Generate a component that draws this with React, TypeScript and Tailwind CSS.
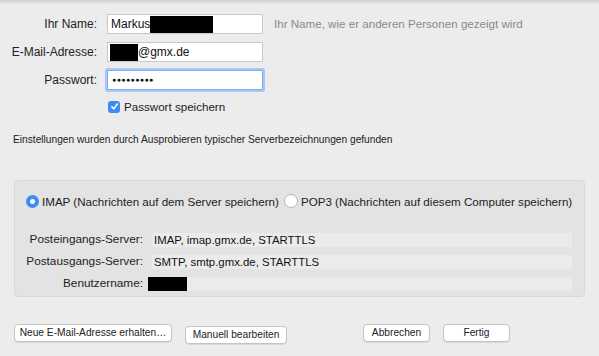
import React from 'react';

const font = { fontFamily: '"Liberation Sans", Arial, sans-serif' };

function Label({ children }: { children: React.ReactNode }) {
  return <div className="w-[97px] text-right text-[12px] text-[#222] whitespace-nowrap">{children}</div>;
}

function Redacted({ w }: { w: string }) {
  return <span className={`inline-block bg-black h-[17px] ${w}`} />;
}

function MacButton({ children, w }: { children: React.ReactNode; w: string }) {
  return (
    <button
      className={`h-[18px] ${w} rounded-[4px] bg-white border border-[#c4c4c4] shadow-[0_1px_0_rgba(0,0,0,0.08)] text-[10.2px] text-[#222] leading-none whitespace-nowrap`}
    >
      {children}
    </button>
  );
}

function InfoRow({ label, children }: { label: string; children?: React.ReactNode }) {
  return (
    <div className="flex items-center h-[14px]">
      <div className="w-[126px] text-right text-[11.8px] text-[#222] pr-[9px] shrink-0 whitespace-nowrap">{label}</div>
      <div className="flex-1 h-[14px] bg-[#ebebeb] text-[11.4px] text-[#111] leading-[14px] flex items-center whitespace-nowrap">
        {children}
      </div>
    </div>
  );
}

export default function App() {
  return (
    <div className="w-[599px] h-[356px] bg-[#ececec] relative overflow-hidden" style={font}>
      {/* Schatten der Titelleiste */}
      <div className="h-[4px] bg-gradient-to-b from-[#cfcfcf] to-[#ececec]" />

      {/* Formular */}
      <div className="flex flex-col gap-[8px] pt-[10px]">
        <div className="flex items-center gap-[10px]">
          <Label>Ihr Name:</Label>
          <div className="w-[156px] h-[20px] bg-white border border-[#c8c8c8] flex items-center pl-[3px] text-[12px] text-[#111]">
            Markus<Redacted w="w-[63px]" />
          </div>
          <span className="ml-[1px] text-[11.6px] text-[#8a8a8a] whitespace-nowrap">Ihr Name, wie er anderen Personen gezeigt wird</span>
        </div>
        <div className="flex items-center gap-[10px]">
          <Label>E-Mail-Adresse:</Label>
          <div className="w-[156px] h-[20px] bg-white border border-[#c8c8c8] flex items-center pl-[2px] text-[12px] text-[#111]">
            <Redacted w="w-[28px]" />@gmx.de
          </div>
        </div>
        <div className="flex items-center gap-[10px]">
          <Label>Passwort:</Label>
          <div className="w-[156px] h-[20px] bg-white border border-[#7aaaf0] ring-[2px] ring-[#a7c8f5] rounded-[1px] flex items-center pl-[4px] text-[7px] tracking-[0.4px] text-[#111]">
            ●●●●●●●●●
          </div>
        </div>
        <div className="flex items-center pl-[108px] gap-[4px]">
          <span className="w-[12px] h-[12px] rounded-[3px] bg-[#3b8cf5] flex items-center justify-center">
            <svg width="9" height="9" viewBox="0 0 10 10">
              <path d="M2 5.3 L4.2 7.6 L8.2 2.2" stroke="white" strokeWidth="1.7" fill="none" strokeLinecap="round" strokeLinejoin="round" />
            </svg>
          </span>
          <span className="text-[11.6px] text-[#222]">Passwort speichern</span>
        </div>
      </div>

      <p className="mt-[17px] ml-[13px] text-[10.2px] text-[#222] whitespace-nowrap">
        Einstellungen wurden durch Ausprobieren typischer Serverbezeichnungen gefunden
      </p>

      {/* Server-Einstellungen */}
      <div className="mt-[32px] ml-[14px] w-[571px] h-[117px] rounded-[4px] bg-[#e3e3e3] border border-[#d8d8d8] px-[11px] pt-[12px]">
        <div className="flex items-center text-[11.6px] text-[#222] whitespace-nowrap">
          <span className="w-[13px] h-[13px] rounded-full bg-[#3b8cf5] flex items-center justify-center mr-[3px]">
            <span className="w-[5px] h-[5px] rounded-full bg-white" />
          </span>
          <span>IMAP (Nachrichten auf dem Server speichern)</span>
          <span className="w-[14px] h-[14px] rounded-full bg-white border border-[#b5b5b5] ml-[5px] mr-[3px]" />
          <span>POP3 (Nachrichten auf diesem Computer speichern)</span>
        </div>
        <div className="flex flex-col gap-[8px] mt-[23px] pr-[1px]">
          <InfoRow label="Posteingangs-Server:">
            <span className="pl-[2px]">IMAP, imap.gmx.de, STARTTLS</span>
          </InfoRow>
          <InfoRow label="Postausgangs-Server:">
            <span className="pl-[2px]">SMTP, smtp.gmx.de, STARTTLS</span>
          </InfoRow>
          <InfoRow label="Benutzername:">
            <span className="inline-block w-[39px] h-[14px] bg-black -ml-[4px]" />
          </InfoRow>
        </div>
      </div>

      {/* Schaltflächen */}
      <div className="flex items-center mt-[24px] px-[14px]">
        <MacButton w="w-[158px]">Neue E-Mail-Adresse erhalten…</MacButton>
        <div className="ml-[13px]">
          <MacButton w="w-[102px]">Manuell bearbeiten</MacButton>
        </div>
        <div className="ml-auto flex gap-[13px] mr-[75px]">
          <MacButton w="w-[67px]">Abbrechen</MacButton>
          <MacButton w="w-[67px]">Fertig</MacButton>
        </div>
      </div>
    </div>
  );
}
